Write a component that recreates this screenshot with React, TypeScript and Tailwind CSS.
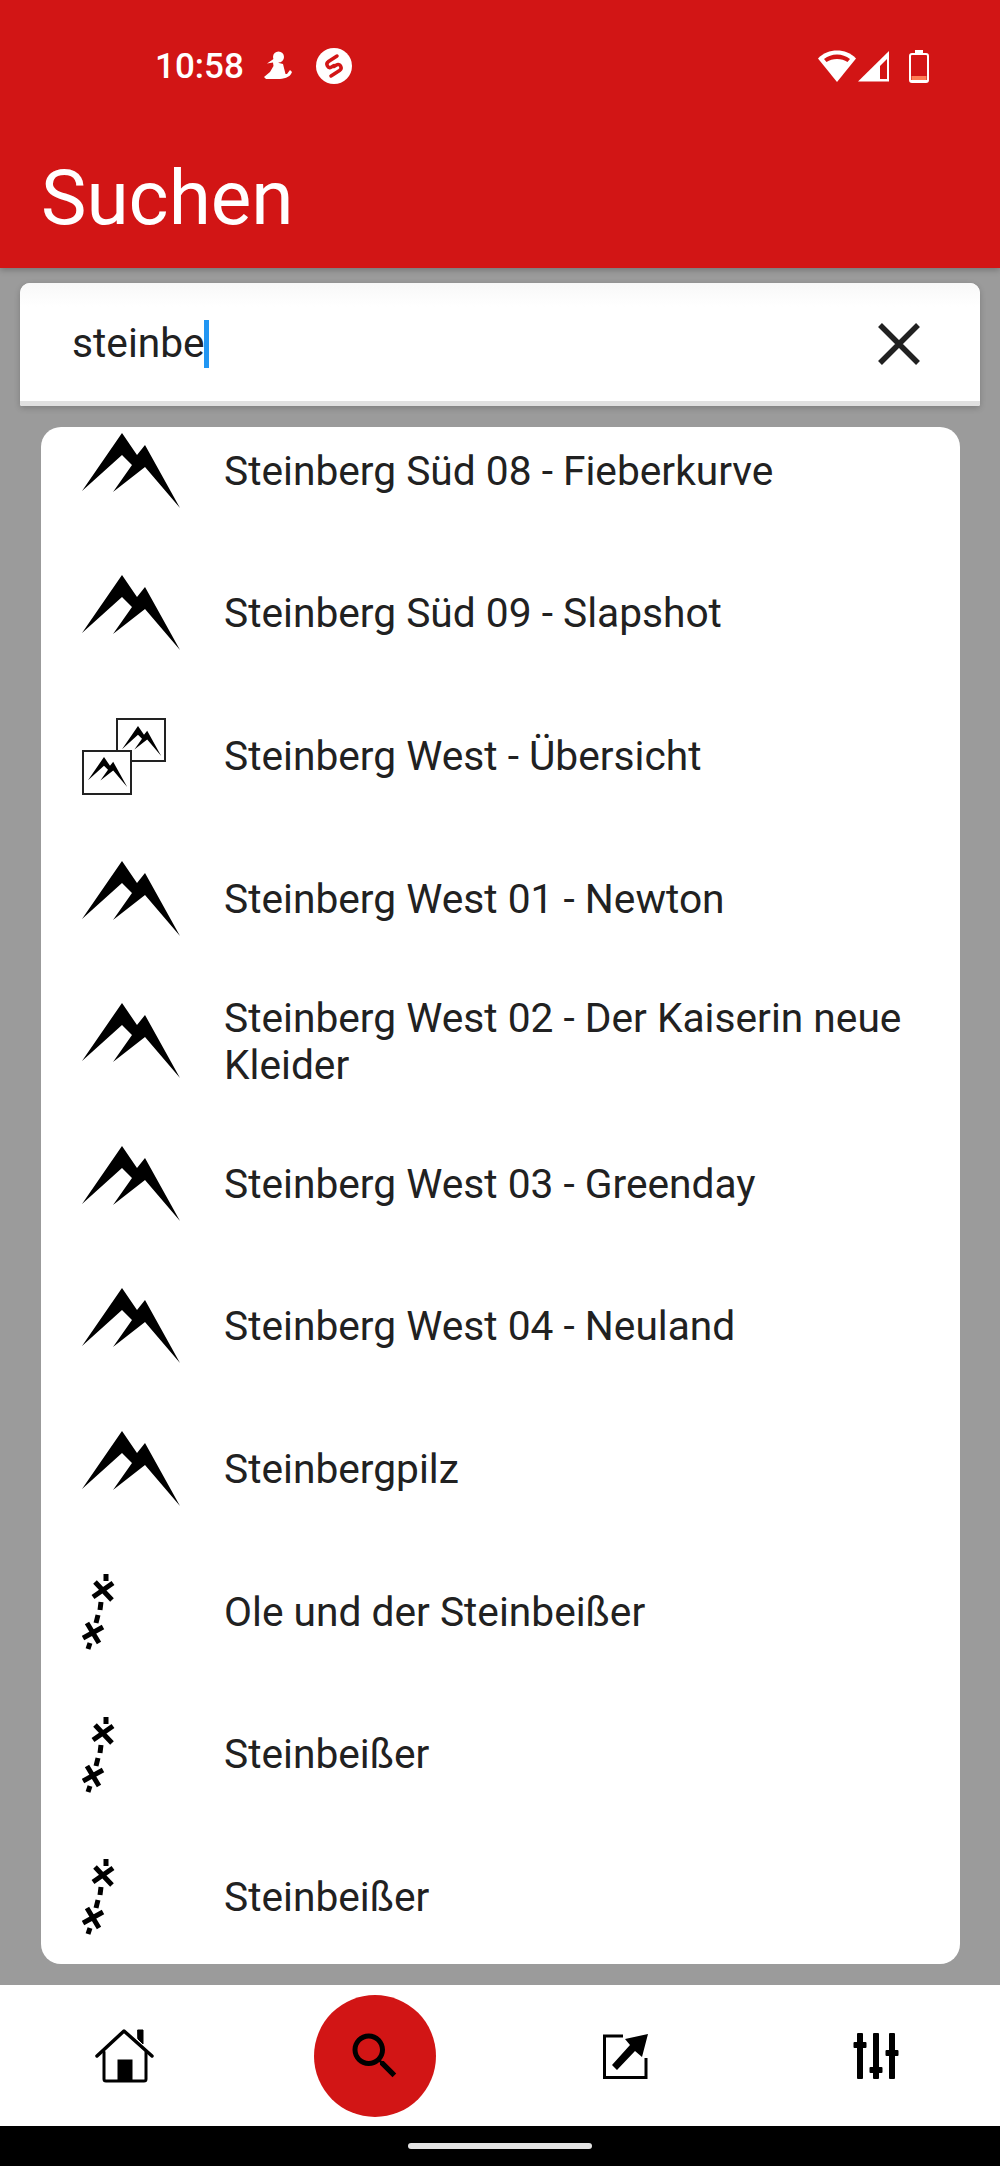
const RED = 'bg-[#d21515]'

const rows = [
  { icon: 'peak', label: 'Steinberg Süd 08 - Fieberkurve' },
  { icon: 'peak', label: 'Steinberg Süd 09 - Slapshot' },
  { icon: 'gallery', label: 'Steinberg West - Übersicht' },
  { icon: 'peak', label: 'Steinberg West 01 - Newton' },
  { icon: 'peak', label: 'Steinberg West 02 - Der Kaiserin neue Kleider' },
  { icon: 'peak', label: 'Steinberg West 03 - Greenday' },
  { icon: 'peak', label: 'Steinberg West 04 - Neuland' },
  { icon: 'peak', label: 'Steinbergpilz' },
  { icon: 'trail', label: 'Ole und der Steinbeißer' },
  { icon: 'trail', label: 'Steinbeißer' },
  { icon: 'trail', label: 'Steinbeißer' },
]

const PEAK = '40,0 0,58 40,22 50,32 31,59 63,34 98,75 63,12 55,22'

function PeakIcon() {
  return (
    <svg width="98" height="75" viewBox="0 0 98 75" className="-translate-y-px">
      <polygon points={PEAK} fill="#000" />
    </svg>
  )
}

function GalleryIcon() {
  return (
    <svg width="84" height="77" viewBox="0 0 84 77">
      <rect x="35" y="1" width="48" height="42" fill="#fff" stroke="#222" strokeWidth="2" />
      <polygon points={PEAK} fill="#000" transform="translate(40,8) scale(0.4)" />
      <rect x="1" y="33" width="48" height="43" fill="#fff" stroke="#222" strokeWidth="2" />
      <polygon points={PEAK} fill="#000" transform="translate(6,39) scale(0.4)" />
    </svg>
  )
}

function TrailIcon() {
  return (
    <svg width="34" height="76" viewBox="0 0 34 76" fill="none" stroke="#000" strokeWidth="5">
      <path d="M13 8 30 26M11 23 31 9" />
      <path d="M21 53 1 64M5 49 17 69" />
      <path d="M24 0 24 7M19 28 18 36M16 41 14 49M8 69 6 75" />
    </svg>
  )
}

function RowIcon({ type }: { type: string }) {
  if (type === 'gallery') return <GalleryIcon />
  if (type === 'trail') return <TrailIcon />
  return <PeakIcon />
}

function StatusBar() {
  return (
    <div className="flex items-center h-[132px] pl-[155px] pr-[71px] text-white">
      <span className="text-[35px] font-medium leading-none w-[95px]">10:58</span>
      {/* fitness app notification */}
      <svg width="30" height="30" viewBox="0 0 30 30" className="ml-[13px]" fill="#fff">
        <circle cx="15.5" cy="6" r="5.5" />
        <path d="M12 7 4 12.500 10 11.500 10.500 15 7 21 1 26 3 28H15C20 28 27 27 29 21L27 19 24 23 22.500 23 20 13 16 12 Z" />
      </svg>
      {/* shazam */}
      <svg width="36" height="36" viewBox="0 0 36 36" className="ml-[23px]">
        <circle cx="18" cy="18" r="18" fill="#fff" />
        <path
          d="M21 8 12.500 13.500C9 16 12 21 15.500 19L18 17.500M15 28 23.500 22.500C27 20 24 15 20.500 17L18 18.500"
          fill="none"
          stroke="#d21515"
          strokeWidth="3.500"
          strokeLinecap="round"
        />
      </svg>
      <div className="flex-1" />
      {/* wifi */}
      <svg width="38" height="32" viewBox="0 0 38 32" fill="#fff">
        <path d="M0 8.500C5 3 12 0.500 19 0.500S33 3 38 8.500L19 32Z" />
        <path d="M6 9C10 6 14 4.500 19 4.500S28 6 32 9L29.500 12C26.500 10 23 9 19 9S11.500 10 8.500 12Z" fill="#d21515" />
      </svg>
      {/* signal */}
      <svg width="31" height="31" viewBox="0 0 31 31" className="ml-[2px]">
        <path d="M0 30.500 31 0V30.500Z" fill="#fff" />
        <polygon points="22,15 29,8 29,28 22,28" fill="#d21515" />
      </svg>
      {/* battery */}
      <svg width="20" height="33" viewBox="0 0 20 33" className="ml-[20px]">
        <rect x="6" y="0" width="8" height="5" fill="#fff" />
        <rect x="1" y="4" width="18" height="28" rx="2" fill="none" stroke="#fff" strokeWidth="2" />
        <rect x="2.500" y="26" width="15" height="4" fill="#ff7d55" />
        <rect x="2" y="30" width="16" height="1" fill="#fff" />
      </svg>
    </div>
  )
}

function HomeIcon() {
  return (
    <svg width="60" height="56" viewBox="0 0 60 56" fill="none" stroke="#000" strokeLinecap="round" strokeLinejoin="round">
      <path d="M2 28 29 3 57 28" strokeWidth="3.500" />
      <path d="M43 2H48V16L43 11Z" fill="#000" strokeWidth="1" />
      <path d="M9 24V51Q9 53 11 53H49Q51 53 51 51V24" strokeWidth="3" />
      <rect x="23" y="32" width="14" height="20" fill="#000" strokeWidth="1" strokeLinejoin="miter" />
    </svg>
  )
}

function SearchIcon() {
  return (
    <svg width="60" height="60" viewBox="0 0 24 24" fill="#000">
      <path d="M15.5 14h-.79l-.28-.27C15.41 12.59 16 11.11 16 9.5 16 5.91 13.09 3 9.5 3S3 5.910 3 9.500 5.910 16 9.500 16c1.610 0 3.090-.59 4.230-1.570l.27.28v.79l5 4.990L20.490 19l-4.990-5zm-6 0C7.010 14 5 11.990 5 9.500S7.010 5 9.500 5 14 7.010 14 9.500 11.990 14 9.500 14z" />
    </svg>
  )
}

function ShareIcon() {
  return (
    <svg width="48" height="48" viewBox="0 0 48 48">
      <path d="M22 4H3.500V45.500H45V26" fill="none" stroke="#000" strokeWidth="3" />
      <polygon points="47,2 24,7 29,13 11,33 16,38 34,19 41,25" fill="#000" />
    </svg>
  )
}

function TuneIcon() {
  return (
    <svg width="48" height="48" viewBox="0 0 48 48" fill="#000">
      <rect x="6" y="1" width="6" height="46" rx="1" />
      <rect x="22" y="1" width="6" height="46" rx="1" />
      <rect x="38" y="1" width="6" height="46" rx="1" />
      <rect x="2.500" y="10" width="13" height="6" rx="1" />
      <rect x="18.500" y="35" width="13" height="6" rx="1" />
      <rect x="34.500" y="18" width="13" height="6" rx="1" />
    </svg>
  )
}

export default function App() {
  return (
    <main
      className="flex flex-col h-[2166px] w-[1000px] overflow-hidden bg-[#9b9b9b] text-[#212121]"
      style={{ fontFamily: 'Roboto, sans-serif' }}
    >
      {/* Header */}
      <header className={`${RED} h-[268px] shrink-0 shadow-[0_2px_6px_rgba(0,0,0,0.25)] z-10`}>
        <StatusBar />
        <h1 className="pl-[41px] pt-[18px] text-[76.5px] leading-[96px] text-white">Suchen</h1>
      </header>

      {/* Search field */}
      <div className="mx-[20px] mt-[15px] h-[123px] shrink-0 rounded-t-[10px] rounded-b-[2px] overflow-hidden bg-white shadow-[0_2px_6px_rgba(0,0,0,0.2)] flex flex-col">
        <div className="flex flex-1 items-center bg-gradient-to-b from-[#f8f8f8] to-white to-[20%] pl-[52px] pr-[59px]">
          <span className="text-[40.7px] leading-none pt-[3px]">steinbe</span>
          <span className="w-[5px] h-[48px] bg-[#2196f3] -ml-px mt-[3px]" />
          <div className="flex-1" />
          <svg width="44" height="44" viewBox="0 0 44 44" stroke="#212121" strokeWidth="5.500" fill="none" className="mt-[3px]">
            <path d="M3 3 41 41M41 3 3 41" />
          </svg>
        </div>
        <div className="h-[5px] bg-[#e0e0e0]" />
      </div>

      {/* Results */}
      <div className="ml-[41px] mr-[40px] mt-[21px] h-[1537px] shrink-0 rounded-[20px] bg-white overflow-hidden">
        <ul className="-mt-[27px]">
          {rows.map((row, i) => (
            <li key={i} className="flex items-center h-[142.6px]">
              <div className="w-[184px] pl-[41px] shrink-0 flex items-center">
                <RowIcon type={row.icon} />
              </div>
              <span className="text-[40.7px] leading-[47px] pr-[40px] -ml-px">{row.label}</span>
            </li>
          ))}
        </ul>
      </div>

      {/* Bottom nav */}
      <nav className="mt-[21px] h-[141px] shrink-0 bg-white grid grid-cols-4 items-center justify-items-center">
        <HomeIcon />
        <div className={`${RED} w-[122px] h-[122px] rounded-full flex items-center justify-center`}>
          <SearchIcon />
        </div>
        <ShareIcon />
        <TuneIcon />
      </nav>

      {/* System nav */}
      <div className="flex-1 bg-black flex items-center justify-center">
        <div className="w-[184px] h-[6px] rounded-full bg-[#e4e4e4]" />
      </div>
    </main>
  )
}
